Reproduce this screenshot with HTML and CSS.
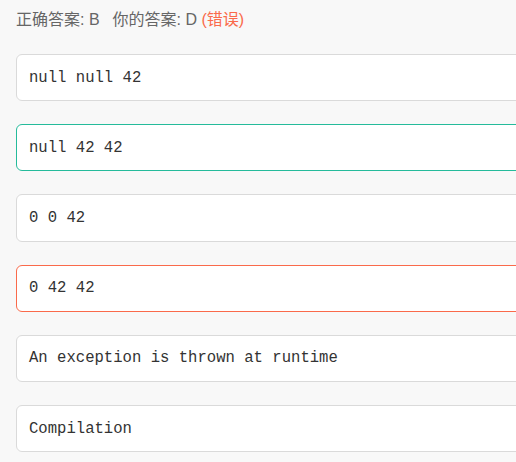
FILE: index.html
```html
<!DOCTYPE html>
<html lang="zh">
<head>
<meta charset="utf-8">
<link rel="stylesheet" href="styles.css">
</head>
<body>
<div class="page">
  <div class="result">
    <span>正确答案: B</span><span class="mine">你的答案: D <span class="wrong">(错误)</span></span>
  </div>
  <ul class="options">
    <li class="option">null null 42</li>
    <li class="option correct">null 42 42</li>
    <li class="option">0 0 42</li>
    <li class="option error">0 42 42</li>
    <li class="option">An exception is thrown at runtime</li>
    <li class="option">Compilation</li>
  </ul>
</div>
</body>
</html>
```

FILE: styles.css
```css
html, body {
  margin: 0;
  padding: 0;
  background: #f8f8f8;
  overflow: hidden;
}
.page {
  width: 600px;
  padding: 8px 0 0 16px;
}
.result {
  font-family: "Liberation Sans", "Noto Sans CJK SC", sans-serif;
  font-size: 16px;
  line-height: 24px;
  color: #666;
  height: 24px;
}
.mine {
  margin-left: 13px;
}
.wrong {
  color: #fa6a4b;
}
.options {
  list-style: none;
  margin: 22px 0 0 0;
  padding: 0;
  display: flex;
  flex-direction: column;
  gap: 23px;
}
.option {
  box-sizing: border-box;
  height: 47.2px;
  width: 560px;
  background: #fff;
  border: 1px solid #dadada;
  border-radius: 6px;
  padding: 0 12px;
  display: flex;
  align-items: center;
  font-family: "Liberation Mono", monospace;
  font-size: 15.6px;
  color: #333;
}
.option.correct {
  border-color: #25bb9b;
}
.option.error {
  border-color: #fa6a4b;
}
```
